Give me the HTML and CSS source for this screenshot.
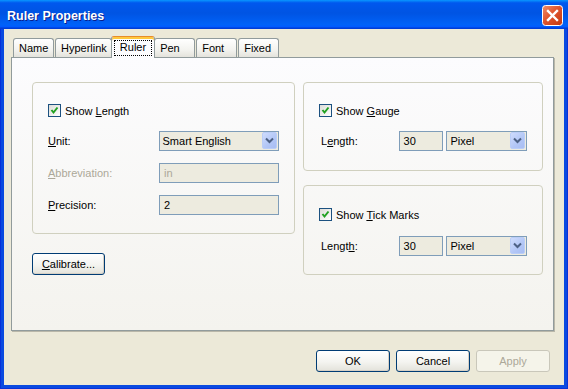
FILE: index.html
```html
<!DOCTYPE html>
<html lang="en">
<head>
    <meta charset="UTF-8">
    <meta name="viewport" content="width=device-width, initial-scale=1.0">
    <title>Ruler Properties</title>
    <link rel="stylesheet" href="styles.css">
</head>
<body>
    <div class="window">
        <div class="titlebar">
            <span class="title">Ruler Properties</span>
            <span class="close-btn">
                <svg width="21" height="21" viewBox="0 0 21 21">
                    <defs>
                        <linearGradient id="red" x1="0" y1="0" x2="1" y2="1">
                            <stop offset="0" stop-color="#f0906c"/>
                            <stop offset="0.45" stop-color="#e0552e"/>
                            <stop offset="1" stop-color="#c2370f"/>
                        </linearGradient>
                    </defs>
                    <rect x="0.5" y="0.5" width="20" height="20" rx="3" fill="url(#red)" stroke="#fff"/>
                    <path d="M6 6 L15 15 M15 6 L6 15" stroke="#fff" stroke-width="2.4" stroke-linecap="square"/>
                </svg>
            </span>
        </div>

        <div class="client">
            <div class="tabs">
                <div class="tab">Name</div>
                <div class="tab">Hyperlink</div>
                <div class="tab active"><span class="focus">Ruler</span></div>
                <div class="tab">Pen</div>
                <div class="tab">Font</div>
                <div class="tab">Fixed</div>
            </div>

            <div class="panel">
                <div class="col-left">
                    <div class="group group-length">
                        <div class="check-row">
                            <span class="checkbox"><svg width="11" height="11" viewBox="0 0 11 11"><path d="M2.5 5 L4.5 7.5 L8.5 2.5" fill="none" stroke="#21a121" stroke-width="2"/></svg></span>
                            <span>Show <u>L</u>ength</span>
                        </div>
                        <div class="field-row">
                            <span class="label label-wide"><u>U</u>nit:</span>
                            <div class="combo combo-wide">
                                <span class="combo-text">Smart English</span>
                                <span class="combo-btn"><svg width="9" height="7" viewBox="0 0 9 7"><path d="M1 1.5 L4.5 5 L8 1.5" fill="none" stroke="#4d6185" stroke-width="2"/></svg></span>
                            </div>
                        </div>
                        <div class="field-row">
                            <span class="label label-wide disabled"><u>A</u>bbreviation:</span>
                            <div class="textbox textbox-wide disabled">in</div>
                        </div>
                        <div class="field-row">
                            <span class="label label-wide"><u>P</u>recision:</span>
                            <div class="textbox textbox-wide">2</div>
                        </div>
                    </div>
                    <button class="btn calibrate"><u>C</u>alibrate...</button>
                </div>

                <div class="col-right">
                    <div class="group group-gauge">
                        <div class="check-row">
                            <span class="checkbox"><svg width="11" height="11" viewBox="0 0 11 11"><path d="M2.5 5 L4.5 7.5 L8.5 2.5" fill="none" stroke="#21a121" stroke-width="2"/></svg></span>
                            <span>Show <u>G</u>auge</span>
                        </div>
                        <div class="field-row">
                            <span class="label label-short">L<u>e</u>ngth:</span>
                            <div class="textbox textbox-num">30</div>
                            <div class="combo combo-unit">
                                <span class="combo-text">Pixel</span>
                                <span class="combo-btn"><svg width="9" height="7" viewBox="0 0 9 7"><path d="M1 1.5 L4.5 5 L8 1.5" fill="none" stroke="#4d6185" stroke-width="2"/></svg></span>
                            </div>
                        </div>
                    </div>
                    <div class="group group-tick">
                        <div class="check-row">
                            <span class="checkbox"><svg width="11" height="11" viewBox="0 0 11 11"><path d="M2.5 5 L4.5 7.5 L8.5 2.5" fill="none" stroke="#21a121" stroke-width="2"/></svg></span>
                            <span>Show <u>T</u>ick Marks</span>
                        </div>
                        <div class="field-row">
                            <span class="label label-short">Lengt<u>h</u>:</span>
                            <div class="textbox textbox-num">30</div>
                            <div class="combo combo-unit">
                                <span class="combo-text">Pixel</span>
                                <span class="combo-btn"><svg width="9" height="7" viewBox="0 0 9 7"><path d="M1 1.5 L4.5 5 L8 1.5" fill="none" stroke="#4d6185" stroke-width="2"/></svg></span>
                            </div>
                        </div>
                    </div>
                </div>
            </div>

            <div class="buttons">
                <button class="btn">OK</button>
                <button class="btn">Cancel</button>
                <button class="btn disabled">Apply</button>
            </div>
        </div>
    </div>
</body>
</html>
```

FILE: styles.css
```css
body {
    margin: 0;
    font-family: "Liberation Sans", Arial, sans-serif;
    font-size: 11px;
    color: #000;
    background: #ece9d8;
}
.window {
    width: 568px;
    height: 389px;
    display: flex;
    flex-direction: column;
    background: #0a4ae0;
    box-shadow: inset 1px 0 #0831d9, inset -1px 0 #0831d9, inset 0 -1px #0831d9;
}
.titlebar {
    height: 29px;
    flex: none;
    display: flex;
    align-items: center;
    justify-content: space-between;
    padding: 0 5px 0 7px;
    background: linear-gradient(#0997ff 0, #0058ee 10%, #0054e3 45%, #0062f8 85%, #005bff 92%, #003dd7 97%, #003dd7 100%);
}
.title {
    color: #fff;
    font-weight: bold;
    font-size: 12.5px;
    padding-top: 2px;
    text-shadow: 1px 1px #0a1e8c;
}
.close-btn {
    display: flex;
    margin-top: 2px;
}
.client {
    flex: 1;
    margin: 0 4px 4px;
    padding: 7px 10px 0 7px;
    background: #ece9d8;
    display: flex;
    flex-direction: column;
}

/* tabs */
.tabs {
    height: 21px;
    display: flex;
    align-items: flex-end;
    padding-left: 2px;
    position: relative;
    z-index: 1;
}
.tab {
    box-sizing: border-box;
    height: 19px;
    min-width: 41px;
    padding: 0 4px 0 5px;
    margin-right: 1px;
    line-height: 18px;
    border: 1px solid #919b9c;
    border-bottom: none;
    border-radius: 3px 3px 0 0;
    background: linear-gradient(#ffffff, #f3f3ef 60%, #e4e3dc);
}
.tab.active {
    position: relative;
    z-index: 2;
    height: 22px;
    margin: 0 -1px -1px -2px;
    padding: 0 2px;
    border-top: 1px solid #e68b2c;
    box-shadow: inset 0 2px #ffc83c;
    background: #fcfcfe;
}
.focus {
    display: block;
    margin-top: 3px;
    height: 16px;
    line-height: 12px;
    padding: 0 5px;
    border: 1px dotted #000;
    box-sizing: border-box;
}

/* panel */
.panel {
    height: 274px;
    box-sizing: border-box;
    display: flex;
    padding: 24px 10px 0 20px;
    border: 1px solid #919b9c;
    box-shadow: 1px 1px 0 #b9b7a9;
    background: linear-gradient(#fcfcfe, #f4f3ee);
}
.col-left {
    width: 263px;
}
.col-right {
    width: 240px;
    margin-left: 8px;
}
.group {
    box-sizing: border-box;
    border: 1px solid #d0d0bf;
    border-radius: 4px;
    padding: 21px 15px 0;
}
.group-length {
    height: 152px;
}
.group-gauge {
    height: 89px;
}
.group-tick {
    height: 90px;
    margin-top: 14px;
    padding-top: 22px;
}
.check-row {
    height: 13px;
    display: flex;
    align-items: center;
    margin-bottom: 14px;
}
.group-tick .check-row {
    margin-bottom: 15px;
}
.checkbox {
    box-sizing: border-box;
    width: 13px;
    height: 13px;
    margin-right: 4px;
    border: 1px solid #1c5180;
    background: linear-gradient(135deg, #dcdcd7, #ffffff);
    display: flex;
}
.field-row {
    height: 20px;
    display: flex;
    align-items: center;
    margin-bottom: 12px;
}
.label-wide {
    width: 111px;
}
.label-short {
    width: 78px;
    padding-left: 2px;
}
.disabled {
    color: #aca899;
}
.textbox, .combo {
    box-sizing: border-box;
    height: 20px;
    border: 1px solid #7f9db9;
    background: #edebdf;
    line-height: 18px;
}
.textbox {
    padding-left: 4px;
}
.textbox-wide {
    width: 120px;
}
.textbox-num {
    width: 45px;
    margin-right: 3px;
}
.combo {
    display: flex;
    justify-content: space-between;
    padding: 0 1px 0 3px;
}
.combo-wide {
    width: 121px;
}
.combo-unit {
    width: 81px;
}
.combo-btn {
    box-sizing: border-box;
    width: 15px;
    height: 17px;
    border: 1px solid #bacdf7;
    border-radius: 2px;
    background: linear-gradient(135deg, #cfdcfd, #b2c6f6 60%, #a8bdf3);
    display: flex;
    align-items: center;
    justify-content: center;
}

/* buttons */
.btn {
    box-sizing: border-box;
    width: 74px;
    height: 22px;
    padding: 0;
    font-family: inherit;
    font-size: 11px;
    color: #000;
    border: 1px solid #003c74;
    border-radius: 3px;
    background: linear-gradient(#ffffff, #f4f4f0 55%, #e3e2da);
    box-shadow: inset -1px -1px #d6d0c5;
}
.btn.disabled {
    color: #aca899;
    border-color: #c9c7ba;
    background: #f5f4ea;
    box-shadow: none;
}
.calibrate {
    width: 73px;
    margin-top: 19px;
}
.buttons {
    display: flex;
    justify-content: flex-end;
    gap: 6px;
    margin-top: 19px;
    padding-right: 4px;
}
```
